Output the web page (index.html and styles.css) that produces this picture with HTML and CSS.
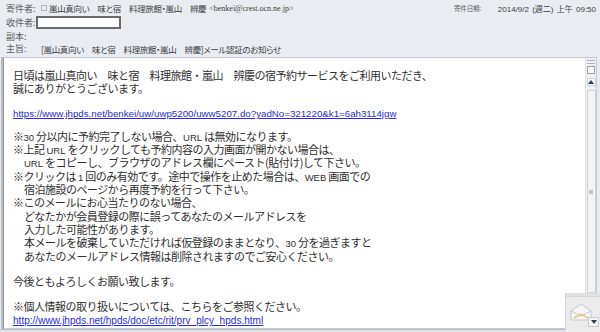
FILE: index.html
```html
<!DOCTYPE html>
<html lang="ja">
<head>
<meta charset="utf-8">
<title>メール認証のお知らせ</title>
<link rel="stylesheet" href="styles.css">
</head>
<body>
<div class="window">
  <div class="header">
    <div class="row r1">
      <span class="label">寄件者:</span>
      <span class="value"><span class="chk"></span><span class="jp">嵐山真向い　味と宿　料理旅館・嵐山　辨慶</span> <span class="addr">&lt;benkei@crest.ocn.ne.jp&gt;</span></span>
      <span class="date"><span class="dl">寄件日期:</span><span class="dv">2014/9/2 (週二) 上午 09:50</span></span>
    </div>
    <div class="row r2">
      <span class="label">收件者:</span>
      <span class="tobox"></span>
    </div>
    <div class="row r3">
      <span class="label">副本:</span>
    </div>
    <div class="row r4">
      <span class="label">主旨:</span>
      <span class="value subj jp">[嵐山真向い　味と宿　料理旅館・嵐山　辨慶]メール認証のお知らせ</span>
    </div>
  </div>
  <div class="frame">
    <div class="content">
      <div class="ln">日頃は嵐山真向い　味と宿　料理旅館・嵐山　辨慶の宿予約サービスをご利用いただき、</div>
      <div class="ln">誠にありがとうございます。</div>
      <div class="blank"></div>
      <div class="ln"><a class="link l1" href="#">https://www.jhpds.net/benkei/uw/uwp5200/uww5207.do?yadNo=321220&amp;k1=6ah3114jgw</a></div>
      <div class="blank"></div>
      <div class="ln">※<span class="lat">30</span> 分以内に予約完了しない場合、<span class="lat">URL</span> は無効になります。</div>
      <div class="ln">※上記 <span class="lat">URL</span> をクリックしても予約内容の入力画面が開かない場合は、</div>
      <div class="ln ind"><span class="lat">URL</span> をコピーし、ブラウザのアドレス欄にペースト(貼付け)して下さい。</div>
      <div class="ln">※クリックは <span class="lat">1</span> 回のみ有効です。途中で操作を止めた場合は、<span class="lat">WEB</span> 画面での</div>
      <div class="ln ind">宿泊施設のページから再度予約を行って下さい。</div>
      <div class="ln">※このメールにお心当たりのない場合、</div>
      <div class="ln ind">どなたかが会員登録の際に誤ってあなたのメールアドレスを</div>
      <div class="ln ind">入力した可能性があります。</div>
      <div class="ln ind">本メールを破棄していただければ仮登録のままとなり、<span class="lat">30</span> 分を過ぎますと</div>
      <div class="ln ind">あなたのメールアドレス情報は削除されますのでご安心ください。</div>
      <div class="blank b2"></div>
      <div class="ln">今後ともよろしくお願い致します。</div>
      <div class="blank b2"></div>
      <div class="ln">※個人情報の取り扱いについては、こちらをご参照ください。</div>
      <div class="ln"><a class="link l2" href="#">http://www.jhpds.net/hpds/doc/etc/rit/prv_plcy_hpds.html</a></div>
    </div>
    <div class="scrollbar">
      <div class="grip-top"></div>
      <div class="sb-icon"></div>
      <div class="sb-btn up"><svg width="6" height="4" viewBox="0 0 6 4"><path d="M0 4 L3 0 L6 4 Z" fill="#2c3e5c"/></svg></div>
      <div class="thumb"><span class="thumb-grip"></span></div>
      <div class="sb-rest"></div>
    </div>
  </div>
  <div class="footer"></div>
  <div class="panel">
    <div class="panel-top"></div>
    <svg class="env" width="22" height="18" viewBox="0 0 22 18">
      <path d="M1 8 L11 1 L21 8 L21 17 L1 17 Z" fill="#f4f6f8" stroke="#c4c8cc" stroke-width="1"/>
      <path d="M1 8 L11 13 L21 8" fill="none" stroke="#c4c8cc" stroke-width="1"/>
      <path d="M4 15 L11 11 L18 15" fill="none" stroke="#f0c27a" stroke-width="1.5"/>
    </svg>
    <div class="panel-btn"><svg width="6" height="4" viewBox="0 0 6 4"><path d="M0 0 L3 4 L6 0 Z" fill="#2c3e5c"/></svg></div>
  </div>
</div>
</body>
</html>
```

FILE: styles.css
```css
html, body {
  margin: 0;
  padding: 0;
}
body {
  width: 600px;
  height: 332px;
  overflow: hidden;
  background: #e9ecf0;
}
.window {
  position: relative;
  width: 600px;
  height: 332px;
  display: flex;
  flex-direction: column;
  background: #e9ecf0;
}
.header {
  padding: 2px 4px 0 6px;
  height: 55px;
  box-sizing: border-box;
  font-family: "Noto Sans CJK TC", "Noto Sans CJK JP", sans-serif;
  font-size: 9px;
  color: #5b5f66;
}
.row {
  display: flex;
  align-items: center;
  height: 12px;
  white-space: nowrap;
}
.r2 { height: 16px; }
.r3 { height: 12px; }
.r4 { height: 13px; }
.label {
  width: 35px;
  flex: none;
}
.value {
  color: #3a3d42;
  display: flex;
  align-items: center;
}
.jp {
  font-family: "Noto Sans CJK JP", sans-serif;
  font-feature-settings: "palt";
  font-size: 8.5px;
  letter-spacing: -0.35px;
}
.chk {
  width: 4px;
  height: 4px;
  border: 1px solid #b5b9bf;
  margin-right: 2px;
  display: inline-block;
}
.addr {
  font-family: "Liberation Serif", serif;
  font-size: 8px;
  margin-left: 3px;
}
.date {
  margin-left: auto;
  display: flex;
  align-items: center;
  color: #3a3d42;
}
.dl {
  margin-right: 17px;
  font-size: 6.5px;
  letter-spacing: -0.2px;
  color: #5b5f66;
}
.dv {
  font-family: "Liberation Sans", "Noto Sans CJK TC", sans-serif;
  font-size: 8px;
  word-spacing: 1px;
}
.tobox {
  width: 81px;
  height: 9px;
  border: 2px solid #6a6a6a;
  background: #fff;
  margin-left: -5px;
}
.subj { margin-left: 0; }
.frame {
  margin: 2px 3px 0 3px;
  height: 270px;
  display: flex;
  border: 1px solid #c3c9d2;
  border-left: 1px solid #8f959c;
  background: #fff;
  box-shadow: -2px 0 0 #b9bdc2;
}
.content {
  flex: 1;
  padding: 11px 0 0 9px;
  font-family: "Noto Sans CJK JP", sans-serif;
  font-size: 11px;
  letter-spacing: -0.5px;
  color: #2e2e2e;
  white-space: nowrap;
  overflow: hidden;
}
.ln {
  height: 13.3px;
  line-height: 13.3px;
}
.ind { padding-left: 11px; }
.blank { height: 10.5px; }
.b2 { height: 12px; }
.lat {
  font-family: "Liberation Sans", sans-serif;
  font-size: 9.5px;
  letter-spacing: 0;
}
.link {
  font-family: "Liberation Sans", sans-serif;
  letter-spacing: 0;
  color: #2a2ae8;
  text-decoration: underline;
}
.l1 { font-size: 9.72px; }
.l2 { font-size: 10.05px; }
.scrollbar {
  width: 10px;
  flex: none;
  display: flex;
  flex-direction: column;
  align-items: center;
  background: #eef0f3;
  border-left: 1px solid #dde1e6;
}
.grip-top {
  width: 8px;
  height: 2px;
  margin-top: 2px;
  border-top: 1px solid #b0b4ba;
  border-bottom: 1px solid #b0b4ba;
}
.sb-icon {
  width: 6px;
  height: 6px;
  margin-top: 2px;
  border: 1px solid #9aa0a8;
  background: #f6f7f8;
}
.sb-btn {
  width: 9px;
  height: 8px;
  margin-top: 4px;
  display: flex;
  align-items: center;
  justify-content: center;
  background: #f4f5f7;
  border: 1px solid #d3d7dc;
  box-sizing: border-box;
}
.thumb {
  width: 9px;
  height: 203px;
  margin-top: 4px;
  background: #f3f4f6;
  border: 1px solid #cfd3d8;
  box-sizing: border-box;
  display: flex;
  align-items: center;
  justify-content: center;
}
.thumb-grip {
  width: 4px;
  height: 4px;
  background: #c2c6cc;
}
.sb-rest { flex: 1; }
.footer {
  flex: 1;
  border-top: 1px solid #b8bec6;
  background: #dfe3e8;
}
.panel {
  position: absolute;
  left: 565px;
  top: 293px;
  width: 35px;
  height: 39px;
  background: #ececec;
  border-left: 1px solid #d8d8d8;
}
.panel-top {
  height: 3px;
  border-bottom: 1px dotted #c8c8c8;
  background: #e2e2e2;
}
.env {
  position: absolute;
  left: 4px;
  top: 10px;
}
.panel-btn {
  position: absolute;
  left: 22px;
  top: 24px;
  width: 9px;
  height: 8px;
  background: #f4f5f7;
  border: 1px solid #c8ccd2;
  display: flex;
  align-items: center;
  justify-content: center;
}
```
